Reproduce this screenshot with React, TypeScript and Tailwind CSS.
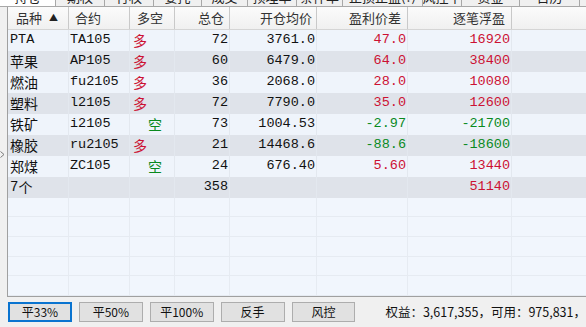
import React from "react";

const MONO = '"Liberation Mono", "Noto Sans CJK SC", monospace';
const SANS = '"Noto Sans CJK SC", "Noto Sans", sans-serif';

const RED = "text-[#cc1133]";
const GREEN = "text-[#0a8a1e]";

type Row = {
  name: string;
  code: string;
  dir: "多" | "空";
  qty: number;
  avg: string;
  diff: string;
  pnl: string;
};

const rows: Row[] = [
  { name: "PTA", code: "TA105", dir: "多", qty: 72, avg: "3761.0", diff: "47.0", pnl: "16920" },
  { name: "苹果", code: "AP105", dir: "多", qty: 60, avg: "6479.0", diff: "64.0", pnl: "38400" },
  { name: "燃油", code: "fu2105", dir: "多", qty: 36, avg: "2068.0", diff: "28.0", pnl: "10080" },
  { name: "塑料", code: "l2105", dir: "多", qty: 72, avg: "7790.0", diff: "35.0", pnl: "12600" },
  { name: "铁矿", code: "i2105", dir: "空", qty: 73, avg: "1004.53", diff: "-2.97", pnl: "-21700" },
  { name: "橡胶", code: "ru2105", dir: "多", qty: 21, avg: "14468.6", diff: "-88.6", pnl: "-18600" },
  { name: "郑煤", code: "ZC105", dir: "空", qty: 24, avg: "676.40", diff: "5.60", pnl: "13440" },
];

const tabs = [
  { label: "持仓", w: 56, active: true },
  { label: "期权", w: 49 },
  { label: "行权", w: 49 },
  { label: "委托", w: 48 },
  { label: "成交", w: 46 },
  { label: "预埋单", w: 49 },
  { label: "条件单", w: 46 },
  { label: "止损止盈(?)", w: 80 },
  { label: "风控中", w: 39 },
  { label: "资金", w: 58 },
  { label: "日历", w: 60 },
];

const COLS = "grid grid-cols-[61px_61px_45px_55px_87px_91px_104px_1fr]";
const CELL = "border-r border-[#e3e8ef] h-full flex items-center overflow-hidden whitespace-nowrap";

function Header() {
  const h = "border-r border-[#c9c9c9] h-full flex items-center text-[13px] text-[#333]";
  return (
    <div
      className={`${COLS} h-[24px] bg-gradient-to-b from-[#fbfbfb] to-[#f0f0f0] border-b border-[#d5d5d5]`}
      style={{ fontFamily: SANS }}
    >
      <div className={`${h} pl-[8px] gap-[7px]`}>
        <span>品种</span>
        <span className="text-[9px] text-[#222]">▲</span>
      </div>
      <div className={`${h} pl-[6px]`}>合约</div>
      <div className={`${h} pl-[7px]`}>多空</div>
      <div className={`${h} justify-end pr-[5px]`}>总仓</div>
      <div className={`${h} justify-end pr-[4px]`}>开仓均价</div>
      <div className={`${h} justify-end pr-[6px]`}>盈利价差</div>
      <div className={`${h} justify-end pr-[6px]`}>逐笔浮盈</div>
      <div className="h-full" />
    </div>
  );
}

function DataRow({ r, i }: { r: Row; i: number }) {
  const bg = i % 2 === 0 ? "bg-[#eff4fb]" : "bg-[#dfe3ea]";
  const sign = (v: string) => (v.startsWith("-") ? GREEN : RED);
  const isCjk = /[^\x00-\x7f]/.test(r.name);
  return (
    <div className={`${COLS} h-[21px] ${bg} text-[13.5px] text-[#111]`} style={{ fontFamily: MONO }}>
      <div
        className={`${CELL} pl-[2px] ${isCjk ? "text-[14px]" : ""}`}
        style={isCjk ? { fontFamily: SANS } : undefined}
      >
        {r.name}
      </div>
      <div className={`${CELL} pl-[1px]`}>{r.code}</div>
      <div
        className={`${CELL} text-[14px] ${r.dir === "多" ? `${RED} pl-[3px]` : `${GREEN} pl-[18px]`}`}
        style={{ fontFamily: SANS }}
      >
        {r.dir}
      </div>
      <div className={`${CELL} justify-end pr-[1px]`}>{r.qty}</div>
      <div className={`${CELL} justify-end pr-[1px]`}>{r.avg}</div>
      <div className={`${CELL} justify-end pr-[1px] ${sign(r.diff)}`}>{r.diff}</div>
      <div className={`${CELL} justify-end pr-[1px] ${sign(r.pnl)}`}>{r.pnl}</div>
      <div className="h-full" />
    </div>
  );
}

function TotalRow() {
  return (
    <div className={`${COLS} h-[21px] bg-[#dfe3ea] text-[13.5px] text-[#111]`} style={{ fontFamily: MONO }}>
      <div className={`${CELL} pl-[2px] text-[14px]`}>
        <span>7</span>
        <span style={{ fontFamily: SANS }}>个</span>
      </div>
      <div className={CELL} />
      <div className={CELL} />
      <div className={`${CELL} justify-end pr-[1px]`}>358</div>
      <div className={CELL} />
      <div className={CELL} />
      <div className={`${CELL} justify-end pr-[1px] ${RED}`}>51140</div>
      <div className="h-full" />
    </div>
  );
}

function EmptyRow() {
  return (
    <div className={`${COLS} h-[21px] border-b border-[#e6ebf2]`}>
      {Array.from({ length: 7 }).map((_, k) => (
        <div key={k} className="h-full border-r border-[#e6ebf2]" />
      ))}
      <div />
    </div>
  );
}

function Btn({ label, active }: { label: string; active?: boolean }) {
  return (
    <button
      className={`w-[64px] h-[20px] flex items-center justify-center text-[12px] text-[#111] bg-[#e1e1e1] ${
        active ? "border-2 border-[#0a74d0]" : "border border-[#adadad]"
      }`}
      style={{ fontFamily: SANS }}
    >
      {label}
    </button>
  );
}

export default function App() {
  return (
    <div className="w-[586px] h-[327px] bg-[#f0f0f0] flex flex-col overflow-hidden select-none">
      <div className="h-[7px] flex border-b border-[#a8a8a8] shrink-0" style={{ fontFamily: SANS }}>
        {tabs.map((t) => (
          <div
            key={t.label}
            className={`h-full overflow-hidden border-r border-[#a8a8a8] flex justify-center shrink-0 ${
              t.active ? "bg-[#ffffff]" : "bg-[#f0f0f0]"
            }`}
            style={{ width: t.w }}
          >
            <span className="text-[13px] leading-[16px] -mt-[11px] text-[#222] whitespace-nowrap">
              {t.label}
            </span>
          </div>
        ))}
      </div>

      <div className="flex h-[290px] shrink-0">
        {/* splitter gutter */}
        <div className="w-[7px] shrink-0 flex flex-col items-start pt-[144px]">
          <svg width="5" height="7" viewBox="0 0 5 7">
            <path d="M0.5 0.5 L4 3.5 L0.5 6.5" fill="none" stroke="#7a7a7a" strokeWidth="1" />
          </svg>
        </div>

        <div className="flex-1 flex flex-col border-l border-b border-[#a0a0a0] bg-[#f1f6fd] overflow-hidden">
          <Header />
          {rows.map((r, i) => (
            <DataRow key={r.code} r={r} i={i} />
          ))}
          <TotalRow />
          {Array.from({ length: 5 }).map((_, k) => (
            <EmptyRow key={k} />
          ))}
        </div>
      </div>

      <div className="flex-1 flex items-center pl-[8px] gap-[7px]">
        <Btn label="平33%" active />
        <Btn label="平50%" />
        <Btn label="平100%" />
        <Btn label="反手" />
        <Btn label="风控" />
        <span
          className="ml-[23px] text-[12.5px] text-[#111] whitespace-nowrap"
          style={{ fontFamily: SANS }}
        >
          权益：3,617,355，可用：975,831，
        </span>
      </div>
    </div>
  );
}
